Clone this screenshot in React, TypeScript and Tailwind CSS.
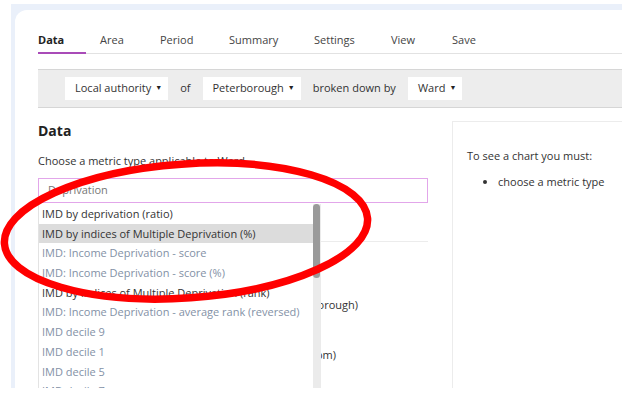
import React from "react";

const tabs = [
  { label: "Data", w: "w-[62px]", active: true },
  { label: "Area", w: "w-[60px]" },
  { label: "Period", w: "w-[69px]" },
  { label: "Summary", w: "w-[85px]" },
  { label: "Settings", w: "w-[77px]" },
  { label: "View", w: "w-[61px]" },
  { label: "Save", w: "w-[60px]" },
];

const items: { t: string; dark?: boolean; hi?: boolean }[] = [
  { t: "IMD by deprivation (ratio)", dark: true },
  { t: "IMD by indices of Multiple Deprivation (%)", dark: true, hi: true },
  { t: "IMD: Income Deprivation - score" },
  { t: "IMD: Income Deprivation - score (%)" },
  { t: "IMD by indices of Multiple Deprivation (rank)", dark: true },
  { t: "IMD: Income Deprivation - average rank (reversed)" },
  { t: "IMD decile 9" },
  { t: "IMD decile 1" },
  { t: "IMD decile 5" },
  { t: "IMD decile 7" },
];

function Select({ label }: { label: string }) {
  return (
    <div className="flex h-[23px] items-center gap-[4px] bg-white pl-[10px] pr-[6px]">
      <span>{label}</span>
      <span className="text-[7px] text-[#222]">▼</span>
    </div>
  );
}

export default function App() {
  return (
    <div
      className="relative h-[394px] w-[622px] overflow-hidden bg-white text-[11px] text-[#333]"
      style={{ fontFamily: '"Open Sans", "Noto Sans", sans-serif' }}
    >
      <div className="mt-[4px] ml-[11px] h-[384px] overflow-hidden bg-[#eaf0fa] pt-[6px] pl-[4px]">
        <div className="flex h-full flex-col rounded-tl-[12px] bg-white pt-[22px] pl-[23px]">
          {/* tabs */}
          <div className="flex border-b border-[#e2e2e2]">
            {tabs.map((t) => (
              <div key={t.label} className={`${t.w} shrink-0`}>
                <div
                  className={`mb-[-1px] pb-[4px] leading-[16px] ${
                    t.active
                      ? "w-[48px] border-b-2 border-[#a94bb8] font-bold text-[#222]"
                      : "border-b-2 border-transparent text-[#444]"
                  }`}
                >
                  {t.label}
                </div>
              </div>
            ))}
            <div className="flex-1" />
          </div>

          {/* selector bar */}
          <div className="mt-[15px] flex h-[39px] shrink-0 items-center gap-[12px] border-y border-[#d6d6d6] bg-[#ededed] pl-[27px] text-[#333]">
            <Select label="Local authority" />
            <span>of</span>
            <Select label="Peterborough" />
            <span>broken down by</span>
            <Select label="Ward" />
          </div>

          {/* content */}
          <div className="mt-[13px] flex flex-1">
            <div className="relative w-[390px] shrink-0">
              <div className="text-[14px] font-bold leading-[20px] text-[#222]">Data</div>
              <div className="mt-[12px] leading-[16px]">Choose a metric type applicable to Ward</div>
              <div className="mt-[9px] flex h-[25px] items-center border-[1.5px] border-[#e2a6ea] pl-[9px] text-[#777]">
                Deprivation
              </div>
              {/* underlying content */}
              <div className="h-[39px] border-b border-[#ececec]" />
              <div className="mt-[55px] w-[320px] text-right leading-[16px]">
                Population estimates (Peterborough)
              </div>
              <div className="mt-[34px] w-[298px] text-right leading-[16px]">
                Census 2011 (Office for National Statistics, random)
              </div>

              {/* dropdown */}
              <div className="absolute left-0 top-[83px] flex h-[200px] w-[283px] border-l border-[#e3e3e3] bg-white">
                <div className="min-w-0 flex-1 overflow-hidden">
                  {items.map((it) => (
                    <div
                      key={it.t}
                      className={`h-[19.7px] whitespace-nowrap pl-[3px] leading-[19.7px] ${
                        it.dark ? "text-[#333]" : "text-[#8391a6]"
                      } ${it.hi ? "bg-[#dcdcdc]" : ""}`}
                    >
                      {it.t}
                    </div>
                  ))}
                </div>
                <div className="w-[8px] shrink-0 bg-[#ebebeb]">
                  <div className="h-[74px] w-[7px] rounded-full bg-[#9a9a9a]" />
                </div>
              </div>
            </div>
            <div className="ml-[24px] flex-1 border-l border-t border-[#ececec] pl-[14px] pt-[26px]">
              <div className="leading-[16px]">To see a chart you must:</div>
              <ul className="mt-[10px] list-disc pl-[31px] leading-[16px]">
                <li>choose a metric type</li>
              </ul>
            </div>
          </div>
        </div>
      </div>

      {/* red annotation */}
      <svg className="pointer-events-none absolute left-0 top-0" width="622" height="394">
        <ellipse
          cx="186"
          cy="231"
          rx="182"
          ry="67"
          transform="rotate(-4 186 231)"
          fill="none"
          stroke="#ff0000"
          strokeWidth="7.5"
        />
      </svg>
    </div>
  );
}
